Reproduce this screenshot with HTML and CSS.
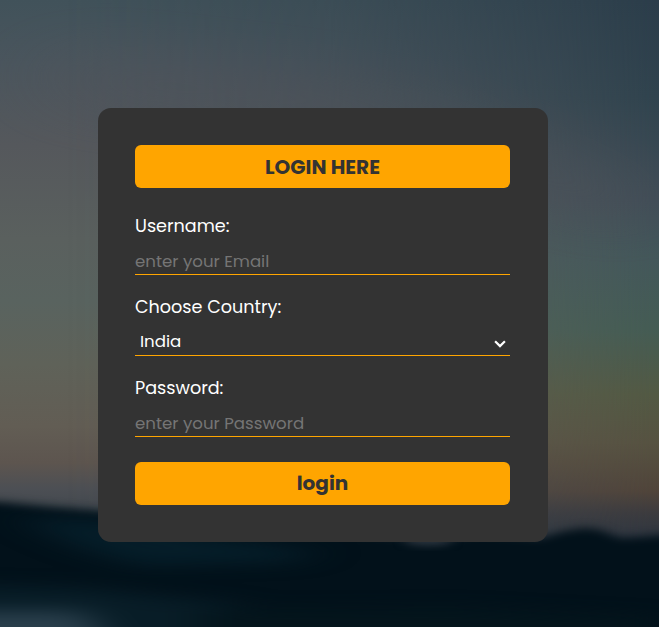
FILE: index.html
```html
<!DOCTYPE html>
<html lang="en">
<head>
<meta charset="utf-8">
<title>Login</title>
<link rel="stylesheet" href="styles.css">
</head>
<body>
<svg class="backdrop" viewBox="0 0 659 627" preserveAspectRatio="none" aria-hidden="true">
  <defs>
    <linearGradient id="skyLeft" gradientUnits="userSpaceOnUse" x1="0" y1="0" x2="0" y2="520">
      <stop offset="0" stop-color="#41525a"/>
      <stop offset=".12" stop-color="#4a555d"/>
      <stop offset=".28" stop-color="#55585c"/>
      <stop offset=".46" stop-color="#5a605e"/>
      <stop offset=".58" stop-color="#59635f"/>
      <stop offset=".7" stop-color="#5f6259"/>
      <stop offset=".82" stop-color="#625d54"/>
      <stop offset=".89" stop-color="#5d554f"/>
      <stop offset=".94" stop-color="#4c4f54"/>
      <stop offset="1" stop-color="#3d454c"/>
    </linearGradient>
    <linearGradient id="skyRight" gradientUnits="userSpaceOnUse" x1="0" y1="0" x2="0" y2="540">
      <stop offset="0" stop-color="#2b3d4a"/>
      <stop offset=".18" stop-color="#30434e"/>
      <stop offset=".37" stop-color="#404d57"/>
      <stop offset=".48" stop-color="#43575a"/>
      <stop offset=".61" stop-color="#445c54"/>
      <stop offset=".73" stop-color="#525943"/>
      <stop offset=".82" stop-color="#565241"/>
      <stop offset=".91" stop-color="#50443a"/>
      <stop offset=".95" stop-color="#3c3b3e"/>
      <stop offset="1" stop-color="#2d3540"/>
    </linearGradient>
    <linearGradient id="fade">
      <stop offset=".1" stop-color="#fff" stop-opacity="0"/>
      <stop offset=".5" stop-color="#fff" stop-opacity=".25"/>
      <stop offset=".84" stop-color="#fff" stop-opacity=".7"/>
      <stop offset="1" stop-color="#fff"/>
    </linearGradient>
    <mask id="rightMask"><rect width="659" height="627" fill="url(#fade)"/></mask>
    <filter id="soft" x="-30%" y="-60%" width="160%" height="220%" color-interpolation-filters="sRGB"><feGaussianBlur stdDeviation="6 4"/></filter>
    <filter id="haze" filterUnits="userSpaceOnUse" x="-200" y="400" width="1100" height="400" color-interpolation-filters="sRGB"><feGaussianBlur stdDeviation="22 8"/></filter>
    <filter id="cloud" filterUnits="userSpaceOnUse" x="-200" y="-200" width="1100" height="800" color-interpolation-filters="sRGB"><feGaussianBlur stdDeviation="50 28"/></filter>
  </defs>
  <rect width="659" height="627" fill="url(#skyLeft)"/>
  <rect width="659" height="627" fill="url(#skyRight)" mask="url(#rightMask)"/>
  <path filter="url(#cloud)" fill="#54545b" opacity=".45" d="M60 50 280 75 420 95 640 190 640 230 400 130 60 100Z"/>
  <path filter="url(#soft)" fill="#02111a" d="M-40 501 0 502 50 507 98 511 200 520 350 532 400 537 450 538 480 533 540 538 565 531 585 528 600 530 620 538 640 537 700 532V700H-40Z"/>
  <g filter="url(#haze)">
    <path fill="#06202c" opacity=".85" d="M20 516 60 519 110 520 210 538 320 552 290 562 140 566 85 550 50 535Z"/>
    <path fill="#081d27" d="M-60 585 80 588 240 604 290 680-60 680Z"/>
    <path fill="#04151c" d="M200 610 460 608 659 618V680H200Z"/>
    <path fill="#293e4b" d="M-80 611 84 611 116 650-80 680Z"/>
  </g>
  <ellipse filter="url(#soft)" cx="428" cy="540" rx="24" ry="5" fill="#303943"/>
</svg>
<main class="page">
  <form class="card">
    <h1 class="bar">LOGIN HERE</h1>
    <div class="field">
      <label class="label" for="user">Username:</label>
      <input class="control" id="user" type="text" placeholder="enter your Email">
    </div>
    <div class="field">
      <label class="label" for="country">Choose Country:</label>
      <div class="select-row">
        <select class="control select" id="country"><option>India</option></select>
        <svg class="chevron" viewBox="0 0 12 8" aria-hidden="true"><path d="M1.1 1.2 6 6.1 10.9 1.2"/></svg>
      </div>
    </div>
    <div class="field">
      <label class="label" for="pass">Password:</label>
      <input class="control" id="pass" type="password" placeholder="enter your Password">
    </div>
    <button class="bar submit" type="button">login</button>
  </form>
</main>
</body>
</html>
```
FILE: styles.css
```css
* {
  box-sizing: border-box;
  margin: 0;
  padding: 0;
}

body {
  height: 627px;
  overflow: hidden;
  background: #02111a;
  font-family: Poppins, Inter, sans-serif;
}

.backdrop {
  position: fixed;
  inset: 0;
  z-index: -1;
  width: 100%;
  height: 100%;
}

.page {
  padding: 108px 0 0 98px;
}

.card {
  display: flex;
  flex-direction: column;
  width: 450px;
  height: 434px;
  padding: 37px 38px 37px 37px;
  border-radius: 13px;
  background: #333;
}

.bar {
  width: 100%;
  height: 43px;
  margin-bottom: 25px;
  border: 0;
  border-radius: 6px;
  background: orange;
  color: #333;
  font: inherit;
  font-size: 20px;
  font-weight: 700;
  line-height: 44px;
  text-align: center;
}

.field {
  height: 62px;
  margin-bottom: 19px;
}

.label {
  display: block;
  height: 35px;
  color: #fff;
  font-size: 17.6px;
  line-height: 26px;
}

.control {
  display: block;
  width: 100%;
  height: 27px;
  border: 0;
  border-bottom: 1px solid orange;
  border-radius: 0;
  outline: 0;
  appearance: none;
  background: transparent;
  color: #fff;
  font: inherit;
  font-size: 16.64px;
  line-height: 26px;
}

.control::placeholder {
  color: #757575;
}

.select-row {
  position: relative;
}

.select {
  padding-left: 5px;
}

.chevron {
  position: absolute;
  top: 11px;
  right: 4px;
  width: 12px;
  height: 8px;
  fill: none;
  stroke: #fff;
  stroke-width: 2.2;
  pointer-events: none;
}

.submit {
  margin: 6px 0 0;
  padding-bottom: 1px;
  line-height: 42px;
}
```
